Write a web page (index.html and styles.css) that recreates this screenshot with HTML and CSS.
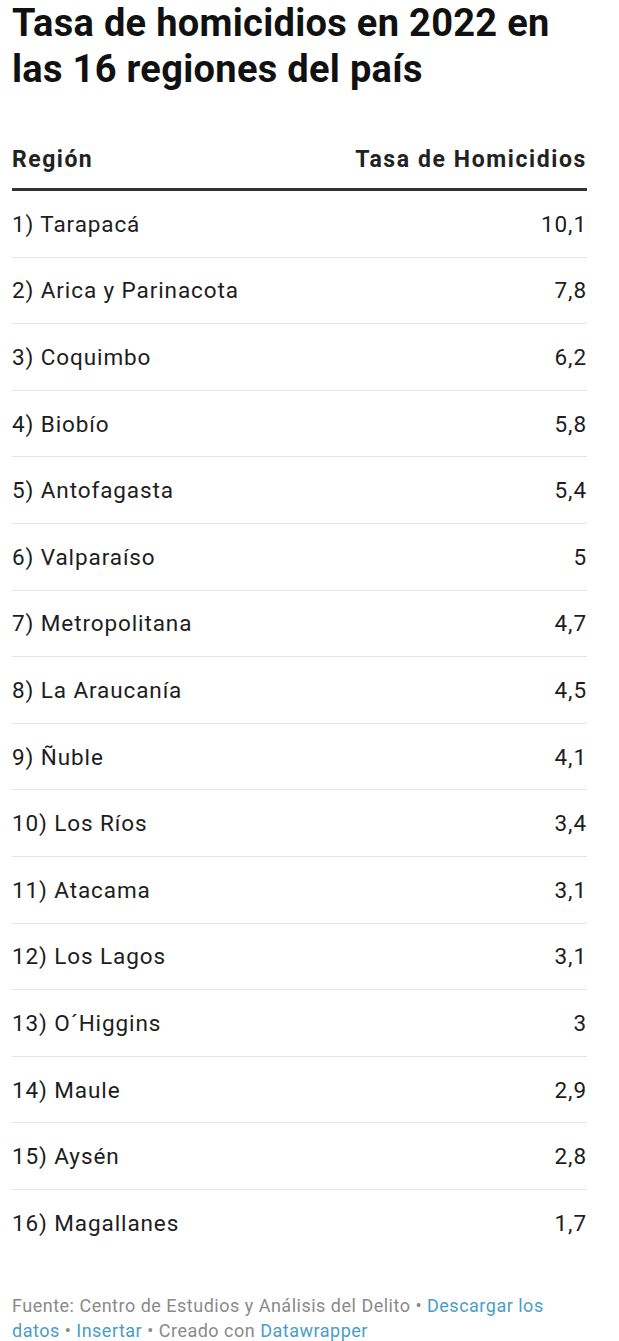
FILE: index.html
```html
<!DOCTYPE html>
<html lang="es">
<head>
    <meta charset="UTF-8">
    <meta name="viewport" content="width=device-width, initial-scale=1.0">
    <title>Tasa de homicidios en 2022</title>
    <link rel="stylesheet" href="styles.css">
</head>
<body>
    <div class="chart">
        <h1 class="chart-title">Tasa de homicidios en 2022 en las 16 regiones del país</h1>

        <table class="rates">
            <thead>
                <tr>
                    <th class="col-region">Región</th>
                    <th class="col-rate">Tasa de Homicidios</th>
                </tr>
            </thead>
            <tbody>
                <tr><td>1) Tarapacá</td><td class="num">10,1</td></tr>
                <tr><td>2) Arica y Parinacota</td><td class="num">7,8</td></tr>
                <tr><td>3) Coquimbo</td><td class="num">6,2</td></tr>
                <tr><td>4) Biobío</td><td class="num">5,8</td></tr>
                <tr><td>5) Antofagasta</td><td class="num">5,4</td></tr>
                <tr><td>6) Valparaíso</td><td class="num">5</td></tr>
                <tr><td>7) Metropolitana</td><td class="num">4,7</td></tr>
                <tr><td>8) La Araucanía</td><td class="num">4,5</td></tr>
                <tr><td>9) Ñuble</td><td class="num">4,1</td></tr>
                <tr><td>10) Los Ríos</td><td class="num">3,4</td></tr>
                <tr><td>11) Atacama</td><td class="num">3,1</td></tr>
                <tr><td>12) Los Lagos</td><td class="num">3,1</td></tr>
                <tr><td>13) O´Higgins</td><td class="num">3</td></tr>
                <tr><td>14) Maule</td><td class="num">2,9</td></tr>
                <tr><td>15) Aysén</td><td class="num">2,8</td></tr>
                <tr><td>16) Magallanes</td><td class="num">1,7</td></tr>
            </tbody>
        </table>

        <p class="notes">
            Fuente: Centro de Estudios y Análisis del Delito •
            <a href="#">Descargar los datos</a> •
            <a href="#">Insertar</a> •
            Creado con <a href="#">Datawrapper</a>
        </p>
    </div>
</body>
</html>
```

FILE: styles.css
```css
body {
    font-family: Roboto, "Liberation Sans", sans-serif;
    margin: 0;
    background-color: #fff;
    color: #1d1d1d;
}
.chart {
    padding: 0 32px 0 12px;
}
.chart-title {
    font-size: 38px;
    font-weight: bold;
    line-height: 46px;
    letter-spacing: 0.3px;
    margin: 0 0 54px;
    color: #111;
}
.rates {
    width: 100%;
    border-collapse: collapse;
}
.rates th {
    font-size: 23px;
    font-weight: bold;
    line-height: 27px;
    letter-spacing: 1.5px;
    color: #222;
    padding: 0 0 15px;
    border-bottom: 3px solid #333;
}
.col-region {
    text-align: left;
}
.rates th.col-rate {
    text-align: right;
    letter-spacing: 1.6px;
}
.rates td {
    font-size: 22.5px;
    letter-spacing: 0.9px;
    height: 65.6px;
    padding: 0;
    border-bottom: 1px solid #e6e6e6;
}
.rates tbody tr:last-child td {
    border-bottom: none;
}
.rates .num {
    text-align: right;
}
.notes {
    margin: 37px 0 0;
    font-size: 18px;
    letter-spacing: 0.5px;
    line-height: 25px;
    color: #8a8a8a;
}
.notes a {
    color: #4a9dc6;
    text-decoration: none;
}
```
